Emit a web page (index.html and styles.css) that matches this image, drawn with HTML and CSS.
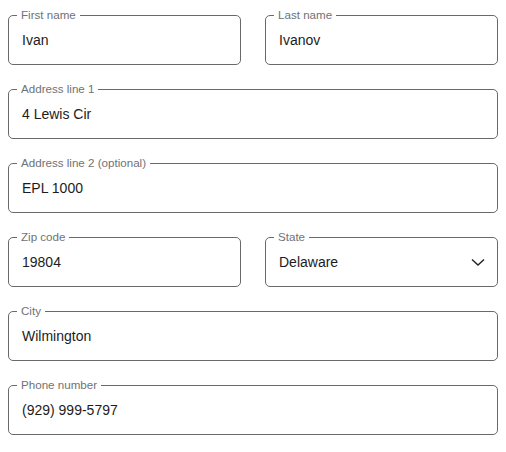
FILE: index.html
```html
<!DOCTYPE html>
<html lang="en">
<head>
<meta charset="utf-8">
<title>Address form</title>
<link rel="stylesheet" href="styles.css">
</head>
<body>
<form class="form">
  <fieldset class="field">
    <legend class="label">First name</legend>
    <div class="value">Ivan</div>
  </fieldset>
  <fieldset class="field">
    <legend class="label">Last name</legend>
    <div class="value">Ivanov</div>
  </fieldset>
  <fieldset class="field wide">
    <legend class="label">Address line 1</legend>
    <div class="value">4 Lewis Cir</div>
  </fieldset>
  <fieldset class="field wide">
    <legend class="label">Address line 2 (optional)</legend>
    <div class="value">EPL 1000</div>
  </fieldset>
  <fieldset class="field">
    <legend class="label">Zip code</legend>
    <div class="value">19804</div>
  </fieldset>
  <fieldset class="field">
    <legend class="label">State</legend>
    <div class="value select">
      <span>Delaware</span>
      <svg class="chevron" width="14" height="8" viewBox="0 0 14 8"><path d="M1 1.5l6 5.5 6-5.5" fill="none" stroke="#222" stroke-width="1.4"/></svg>
    </div>
  </fieldset>
  <fieldset class="field wide">
    <legend class="label">City</legend>
    <div class="value">Wilmington</div>
  </fieldset>
  <fieldset class="field wide">
    <legend class="label">Phone number</legend>
    <div class="value">(929) 999-5797</div>
  </fieldset>
</form>
</body>
</html>
```
FILE: styles.css
```css
html, body {
  margin: 0;
  background: #ffffff;
}
body {
  padding: 8px;
  font-family: "Liberation Sans", Arial, sans-serif;
}
.form {
  display: grid;
  grid-template-columns: 1fr 1fr;
  column-gap: 24px;
  row-gap: 17px;
}
.field {
  margin: 0;
  padding: 0 8px;
  border: 1px solid #6a6a6e;
  border-radius: 5px;
  min-width: 0;
}
.wide {
  grid-column: 1 / -1;
}
.label {
  padding: 0 4px;
  font-size: 11.6px;
  line-height: 14px;
  color: #6f7276;
}
.value {
  box-sizing: border-box;
  height: 42px;
  padding: 10px 0 0 5px;
  font-size: 14px;
  line-height: 16px;
  color: #1c1c1e;
}
.select {
  display: flex;
  justify-content: space-between;
  align-items: flex-start;
}
.chevron {
  margin: 4px 4px 0 0;
}
```
